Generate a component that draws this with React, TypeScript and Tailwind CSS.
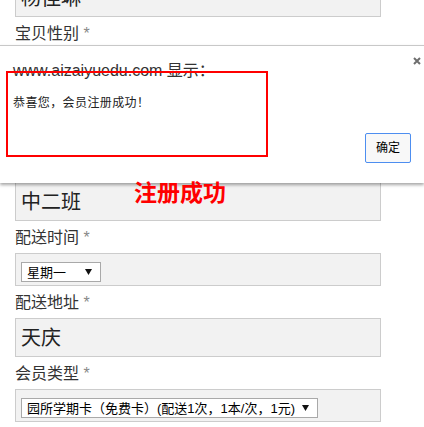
import React from "react";

const font = { fontFamily: '"Liberation Sans", "Noto Sans CJK SC", sans-serif' };

function Label({ text }: { text: string }) {
  return (
    <div className="mt-[5px] mb-[3px] h-[24px] text-[16px] leading-[24px] text-[#333]">
      {text} <span className="text-[#888]">*</span>
    </div>
  );
}

function TextBox({ value, h = "h-[39px]" }: { value: string; h?: string }) {
  return (
    <div
      className={`${h} flex items-center border border-[#ccc] bg-[#f2f2f2] px-[5px] text-[20px] text-[#222]`}
    >
      {value}
    </div>
  );
}

function Caret() {
  return (
    <svg width="7" height="6" viewBox="0 0 7 6" className="shrink-0">
      <path d="M0 0 H7 L3.5 6 Z" fill="#111" />
    </svg>
  );
}

function FakeSelect({ value, w }: { value: string; w: string }) {
  return (
    <div className="h-[33px] border border-[#ccc] bg-[#f2f2f2] pt-[8px] pl-[5px]">
      <div
        className={`${w} flex h-[20px] items-center justify-between border border-[#a9a9a9] bg-white pl-[5px] pr-[8px] text-[13px] leading-none text-black`}
      >
        <span className="whitespace-nowrap">{value}</span>
        <Caret />
      </div>
    </div>
  );
}

export default function App() {
  return (
    <div className="relative h-[427px] w-[424px] overflow-hidden bg-white" style={font}>
      {/* form under the dialog */}
      <div className="mt-[-22px] w-[410px] pl-[15px] pr-[29px]">
        <TextBox value="杨佳琳" />
        <Label text="宝贝性别" />
        <FakeSelect value="男" w="w-[80px]" />
        <Label text="所在班级" />
        <TextBox value="" h="h-[36px]" />
        <Label text="班级名称" />
        <TextBox value="中二班" />
        <Label text="配送时间" />
        <FakeSelect value="星期一" w="w-[80px]" />
        <Label text="配送地址" />
        <TextBox value="天庆" />
        <Label text="会员类型" />
        <FakeSelect value="园所学期卡（免费卡）(配送1次，1本/次，1元)" w="w-[297px]" />
      </div>

      {/* alert dialog */}
      <div className="absolute left-0 top-[45px] h-[138px] w-[424px] border-t border-[#c8c8c8] bg-white px-[13px] pt-[15px] shadow-[0_2px_3px_rgba(0,0,0,0.35)]">
        <button className="absolute right-[3px] top-[11px] flex h-[8px] w-[8px] items-center justify-center">
          <svg width="8" height="8" viewBox="0 0 8 8">
            <path d="M1 1 L7 7 M7 1 L1 7" stroke="#6e6e6e" strokeWidth="2" />
          </svg>
        </button>
        <div className="text-[16px] leading-[20px] text-[#333]">www.aizaiyuedu.com 显示：</div>
        <div className="mt-[14px] text-[12px] leading-[16px] tracking-[0.4px] text-[#222]">
          恭喜您，会员注册成功！
        </div>
        <div className="mt-[22px] flex justify-end">
          <button className="h-[30px] w-[46px] rounded-[2px] border border-[#4d8ef0] bg-[#f8f8f8] text-[12px] text-black">
            确定
          </button>
        </div>
      </div>

      {/* red annotation box */}
      <div className="absolute left-[6px] top-[71px] h-[86px] w-[262px] border-2 border-[#ff0000]" />

      {/* red annotation text */}
      <div className="absolute left-[134px] top-[178px] text-[23px] font-bold leading-[30px] text-[#ff0000]">
        注册成功
      </div>
    </div>
  );
}
